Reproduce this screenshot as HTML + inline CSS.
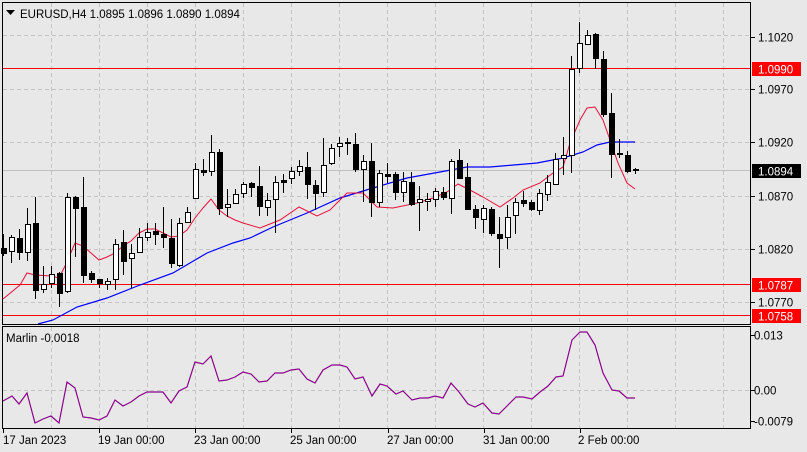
<!DOCTYPE html>
<html><head><meta charset="utf-8"><style>
html,body{margin:0;padding:0;background:#e8e8e8;width:807px;height:452px;overflow:hidden}
svg{display:block}
text{font-family:"Liberation Sans",Tahoma,sans-serif;font-size:11.5px;fill:#000}
</style></head><body>
<svg width="807" height="452" viewBox="0 0 807 452" xmlns="http://www.w3.org/2000/svg">
<rect x="0" y="0" width="807" height="452" fill="#e8e8e8"/>
<g stroke="#c4c4c4" stroke-width="1" stroke-dasharray="4,3" fill="none">
<path d="M51.5 3V324M99.5 3V324M147.5 3V324M195.5 3V324M243.5 3V324M291.5 3V324M339.5 3V324M387.5 3V324M435.5 3V324M483.5 3V324M531.5 3V324M579.5 3V324M627.5 3V324M675.5 3V324M723.5 3V324"/>
<path d="M51.5 327V428M99.5 327V428M147.5 327V428M195.5 327V428M243.5 327V428M291.5 327V428M339.5 327V428M387.5 327V428M435.5 327V428M483.5 327V428M531.5 327V428M579.5 327V428M627.5 327V428M675.5 327V428M723.5 327V428"/>
<path d="M3 35.5H750M3 89.5H750M3 142.5H750M3 196.5H750M3 249.5H750M3 302.5H750M3 390.5H750"/>
</g>
<line x1="3" y1="170.5" x2="750" y2="170.5" stroke="#c0c0c0"/>
<g stroke="#ff0000" stroke-width="1">
<line x1="3" y1="68.5" x2="750" y2="68.5"/>
<line x1="3" y1="284.5" x2="750" y2="284.5"/>
<line x1="3" y1="315.5" x2="750" y2="315.5"/>
</g>
<polyline fill="none" stroke="#0000ff" stroke-width="1.2" points="38,324 53,320 77,307 107,298 140,285 173,273 207,253 233,243 250,238 273,227 307,213 340,198 373,188 407,178 440,172 467,167 490,167 537,163 563,158 583,152 597,145 610,142 635,142"/>
<polyline fill="none" stroke="#e8103a" stroke-width="1" points="3,299 20,285 27,273 35,275 51,276 59,278 67,262 75,243 83,246 91,253 99,260 107,257 115,253 123,246 131,241 139,233 147,229 155,229 163,233 171,237 179,236 187,230 195,218 203,208 211,199 219,210 227,216 235,220 243,223 260,228 280,220 299,207 317,216 330,210 347,193 363,193 377,207 393,208 417,203 433,198 447,192 458,184 470,190 483,197 500,207 513,198 523,190 540,183 553,173 563,167 570,143 580,120 587,108 595,107 603,120 610,140 618,163 627,183 635,189"/>
<g stroke="#000" stroke-width="1" shape-rendering="crispEdges">
<path d="M3.5 234V256M11.5 235V263M19.5 229V260M27.5 208V261M35.5 197V299M43.5 266V293M51.5 266V288M59.5 272V307M67.5 193V293M75.5 196V257M83.5 177V283M91.5 271V283M99.5 279V288M107.5 278V290M115.5 239V290M123.5 230V275M131.5 244V288M139.5 228V253M147.5 223V241M155.5 223V245M163.5 207V248M171.5 219V268M179.5 218V267M187.5 207V223M195.5 163V199M203.5 159V176M211.5 135V176M219.5 149V215M227.5 189V217M235.5 189V203M243.5 182V198M251.5 182V197M259.5 166V216M267.5 193V216M275.5 176V233M283.5 174V193M291.5 167V184M299.5 160V176M307.5 152V199M315.5 180V210M323.5 138V197M331.5 144V165M339.5 137V157M347.5 138V155M355.5 133V172M363.5 155V202M371.5 143V217M379.5 170V207M387.5 163V183M395.5 172V200M403.5 172V202M411.5 172V206M419.5 186V231M427.5 193V211M435.5 188V207M443.5 187V200M451.5 159V214M459.5 149V179M467.5 163V210M475.5 205V229M483.5 205V233M491.5 207V236M499.5 217V268M507.5 205V249M515.5 198V234M523.5 191V207M531.5 200V211M539.5 189V215M547.5 175V201M555.5 153V185M563.5 137V175M571.5 56V173M579.5 22V73M587.5 30V44M595.5 33V69M603.5 51V117M611.5 93V178M619.5 139V158M627.5 151V173M635.5 168V174"/>
</g>
<g stroke="#000" stroke-width="1" shape-rendering="crispEdges">
<rect x="1.5" y="248.5" width="5" height="5" fill="#000"/>
<rect x="9.5" y="237.5" width="5" height="14" fill="#fff"/>
<rect x="17.5" y="238.5" width="5" height="14" fill="#000"/>
<rect x="25.5" y="224.5" width="5" height="28" fill="#fff"/>
<rect x="33.5" y="223.5" width="5" height="67" fill="#000"/>
<rect x="41.5" y="284.5" width="5" height="5" fill="#fff"/>
<rect x="49.5" y="274.5" width="5" height="9" fill="#fff"/>
<rect x="57.5" y="273.5" width="5" height="20" fill="#000"/>
<rect x="65.5" y="197.5" width="5" height="94" fill="#fff"/>
<rect x="73.5" y="197.5" width="5" height="11" fill="#000"/>
<rect x="81.5" y="207.5" width="5" height="68" fill="#000"/>
<rect x="89.5" y="273.5" width="5" height="6" fill="#000"/>
<rect x="97.5" y="279.5" width="5" height="4" fill="#000"/>
<rect x="105.5" y="281.5" width="5" height="3" fill="#fff"/>
<rect x="113.5" y="244.5" width="5" height="35" fill="#fff"/>
<rect x="121.5" y="242.5" width="5" height="19" fill="#000"/>
<rect x="129.5" y="253.5" width="5" height="5" fill="#fff"/>
<rect x="137.5" y="237.5" width="5" height="15" fill="#fff"/>
<rect x="145.5" y="232.5" width="5" height="5" fill="#fff"/>
<rect x="153.5" y="231.5" width="5" height="3" fill="#000"/>
<rect x="161.5" y="234.5" width="5" height="3" fill="#000"/>
<rect x="169.5" y="238.5" width="5" height="25" fill="#000"/>
<rect x="177.5" y="223.5" width="5" height="42" fill="#fff"/>
<rect x="185.5" y="212.5" width="5" height="10" fill="#fff"/>
<rect x="193.5" y="169.5" width="5" height="29" fill="#fff"/>
<rect x="201.5" y="170.5" width="5" height="2" fill="#000"/>
<rect x="209.5" y="152.5" width="5" height="19" fill="#fff"/>
<rect x="217.5" y="152.5" width="5" height="56" fill="#000"/>
<rect x="225.5" y="204.5" width="5" height="3" fill="#fff"/>
<rect x="233.5" y="194.5" width="5" height="9" fill="#fff"/>
<rect x="241.5" y="184.5" width="5" height="9" fill="#fff"/>
<rect x="249.5" y="183.5" width="5" height="4" fill="#000"/>
<rect x="257.5" y="186.5" width="5" height="20" fill="#000"/>
<rect x="265.5" y="200.5" width="5" height="7" fill="#fff"/>
<rect x="273.5" y="182.5" width="5" height="17" fill="#fff"/>
<rect x="281.5" y="180.5" width="5" height="2" fill="#000"/>
<rect x="289.5" y="171.5" width="5" height="7" fill="#fff"/>
<rect x="297.5" y="166.5" width="5" height="5" fill="#fff"/>
<rect x="305.5" y="167.5" width="5" height="17" fill="#000"/>
<rect x="313.5" y="185.5" width="5" height="8" fill="#000"/>
<rect x="321.5" y="165.5" width="5" height="27" fill="#fff"/>
<rect x="329.5" y="148.5" width="5" height="15" fill="#fff"/>
<rect x="337.5" y="143.5" width="5" height="3" fill="#fff"/>
<rect x="345.5" y="142.5" width="5" height="1" fill="#000"/>
<rect x="353.5" y="144.5" width="5" height="25" fill="#000"/>
<rect x="361.5" y="161.5" width="5" height="8" fill="#fff"/>
<rect x="369.5" y="161.5" width="5" height="41" fill="#000"/>
<rect x="377.5" y="173.5" width="5" height="29" fill="#fff"/>
<rect x="385.5" y="174.5" width="5" height="2" fill="#000"/>
<rect x="393.5" y="174.5" width="5" height="18" fill="#000"/>
<rect x="401.5" y="181.5" width="5" height="11" fill="#fff"/>
<rect x="409.5" y="182.5" width="5" height="22" fill="#000"/>
<rect x="417.5" y="199.5" width="5" height="3" fill="#fff"/>
<rect x="425.5" y="199.5" width="5" height="2" fill="#fff"/>
<rect x="433.5" y="191.5" width="5" height="8" fill="#fff"/>
<rect x="441.5" y="192.5" width="5" height="5" fill="#000"/>
<rect x="449.5" y="161.5" width="5" height="37" fill="#fff"/>
<rect x="457.5" y="160.5" width="5" height="18" fill="#000"/>
<rect x="465.5" y="177.5" width="5" height="32" fill="#000"/>
<rect x="473.5" y="209.5" width="5" height="8" fill="#000"/>
<rect x="481.5" y="208.5" width="5" height="11" fill="#fff"/>
<rect x="489.5" y="209.5" width="5" height="24" fill="#000"/>
<rect x="497.5" y="234.5" width="5" height="4" fill="#000"/>
<rect x="505.5" y="217.5" width="5" height="20" fill="#fff"/>
<rect x="513.5" y="202.5" width="5" height="13" fill="#fff"/>
<rect x="521.5" y="200.5" width="5" height="3" fill="#000"/>
<rect x="529.5" y="202.5" width="5" height="7" fill="#000"/>
<rect x="537.5" y="193.5" width="5" height="17" fill="#fff"/>
<rect x="545.5" y="182.5" width="5" height="12" fill="#fff"/>
<rect x="553.5" y="159.5" width="5" height="25" fill="#fff"/>
<rect x="561.5" y="155.5" width="5" height="3" fill="#fff"/>
<rect x="569.5" y="69.5" width="5" height="86" fill="#fff"/>
<rect x="577.5" y="43.5" width="5" height="25" fill="#fff"/>
<rect x="585.5" y="35.5" width="5" height="9" fill="#fff"/>
<rect x="593.5" y="34.5" width="5" height="24" fill="#000"/>
<rect x="601.5" y="59.5" width="5" height="55" fill="#000"/>
<rect x="609.5" y="113.5" width="5" height="41" fill="#000"/>
<rect x="617.5" y="153.5" width="5" height="1" fill="#000"/>
<rect x="625.5" y="155.5" width="5" height="16" fill="#000"/>
<rect x="633.5" y="169.5" width="5" height="1" fill="#000"/>
</g>
<polyline fill="none" stroke="#8b008b" stroke-width="1.2" points="3,401 12,396 19,404 27,393 35,423 43,419 51,416 59,423 67,382 75,388 83,417 91,418 99,420 107,416 115,400 123,406 131,402 139,396 147,392 155,392 163,392 171,403 179,391 187,387 195,362 203,364 211,356 219,381 227,380 235,377 243,372 251,374 259,382 267,381 275,373 283,373 291,370 299,369 307,379 315,383 323,370 332,365 340,365 347,367 355,379 363,377 372,396 380,384 387,386 396,394 403,391 412,400 420,398 428,398 435,396 443,398 451,383 459,392 468,404 475,407 483,403 492,413 499,414 508,405 516,397 523,397 532,399 540,392 548,386 556,377 563,376 572,340 580,332 587,332 595,345 603,373 612,390 619,391 627,398 635,398"/>
<g fill="none" stroke="#000" stroke-width="1" shape-rendering="crispEdges">
<rect x="2.5" y="2.5" width="748" height="322"/>
<rect x="2.5" y="326.5" width="748" height="102"/>
</g>
<g stroke="#000" shape-rendering="crispEdges">
<path d="M750 37.5h5M750 89.5h5M750 142.5h5M750 196.5h5M750 249.5h5M750 302.5h5M750 335.5h5M750 390.5h5M750 421.5h5"/>
<path d="M3.5 428v5M99.5 428v5M195.5 428v5M291.5 428v5M388.5 428v5M484.5 428v5M580.5 428v5"/>
</g>
<path d="M6 10h9l-4.5 5z" fill="#000"/>
<text x="20" y="18">EURUSD,H4  1.0895 1.0896 1.0890 1.0894</text>
<text x="6" y="342">Marlin -0.0018</text>
<g>
<text x="758" y="41.5">1.1020</text>
<text x="758" y="93.5">1.0970</text>
<text x="758" y="146.5">1.0920</text>
<text x="758" y="200.5">1.0870</text>
<text x="758" y="253.5">1.0820</text>
<text x="758" y="306.5">1.0770</text>
<text x="754" y="339.5">0.013</text>
<text x="754" y="394.5">0.00</text>
<text x="754" y="425.5">-0.0079</text>
</g>
<rect x="752" y="62" width="49" height="14" fill="#ff0000"/>
<text x="758" y="73.5" style="fill:#fff">1.0990</text>
<rect x="752" y="164" width="49" height="14" fill="#000"/>
<text x="758" y="175.5" style="fill:#fff">1.0894</text>
<rect x="752" y="278" width="49" height="14" fill="#ff0000"/>
<text x="758" y="289.5" style="fill:#fff">1.0787</text>
<rect x="752" y="309" width="49" height="14" fill="#ff0000"/>
<text x="758" y="320.5" style="fill:#fff">1.0758</text>
<g>
<text x="3" y="444">17 Jan 2023</text>
<text x="98" y="444">19 Jan 00:00</text>
<text x="194" y="444">23 Jan 00:00</text>
<text x="290" y="444">25 Jan 00:00</text>
<text x="387" y="444">27 Jan 00:00</text>
<text x="483" y="444">31 Jan 00:00</text>
<text x="578" y="444">2 Feb 00:00</text>
</g>
</svg>
</body></html>
